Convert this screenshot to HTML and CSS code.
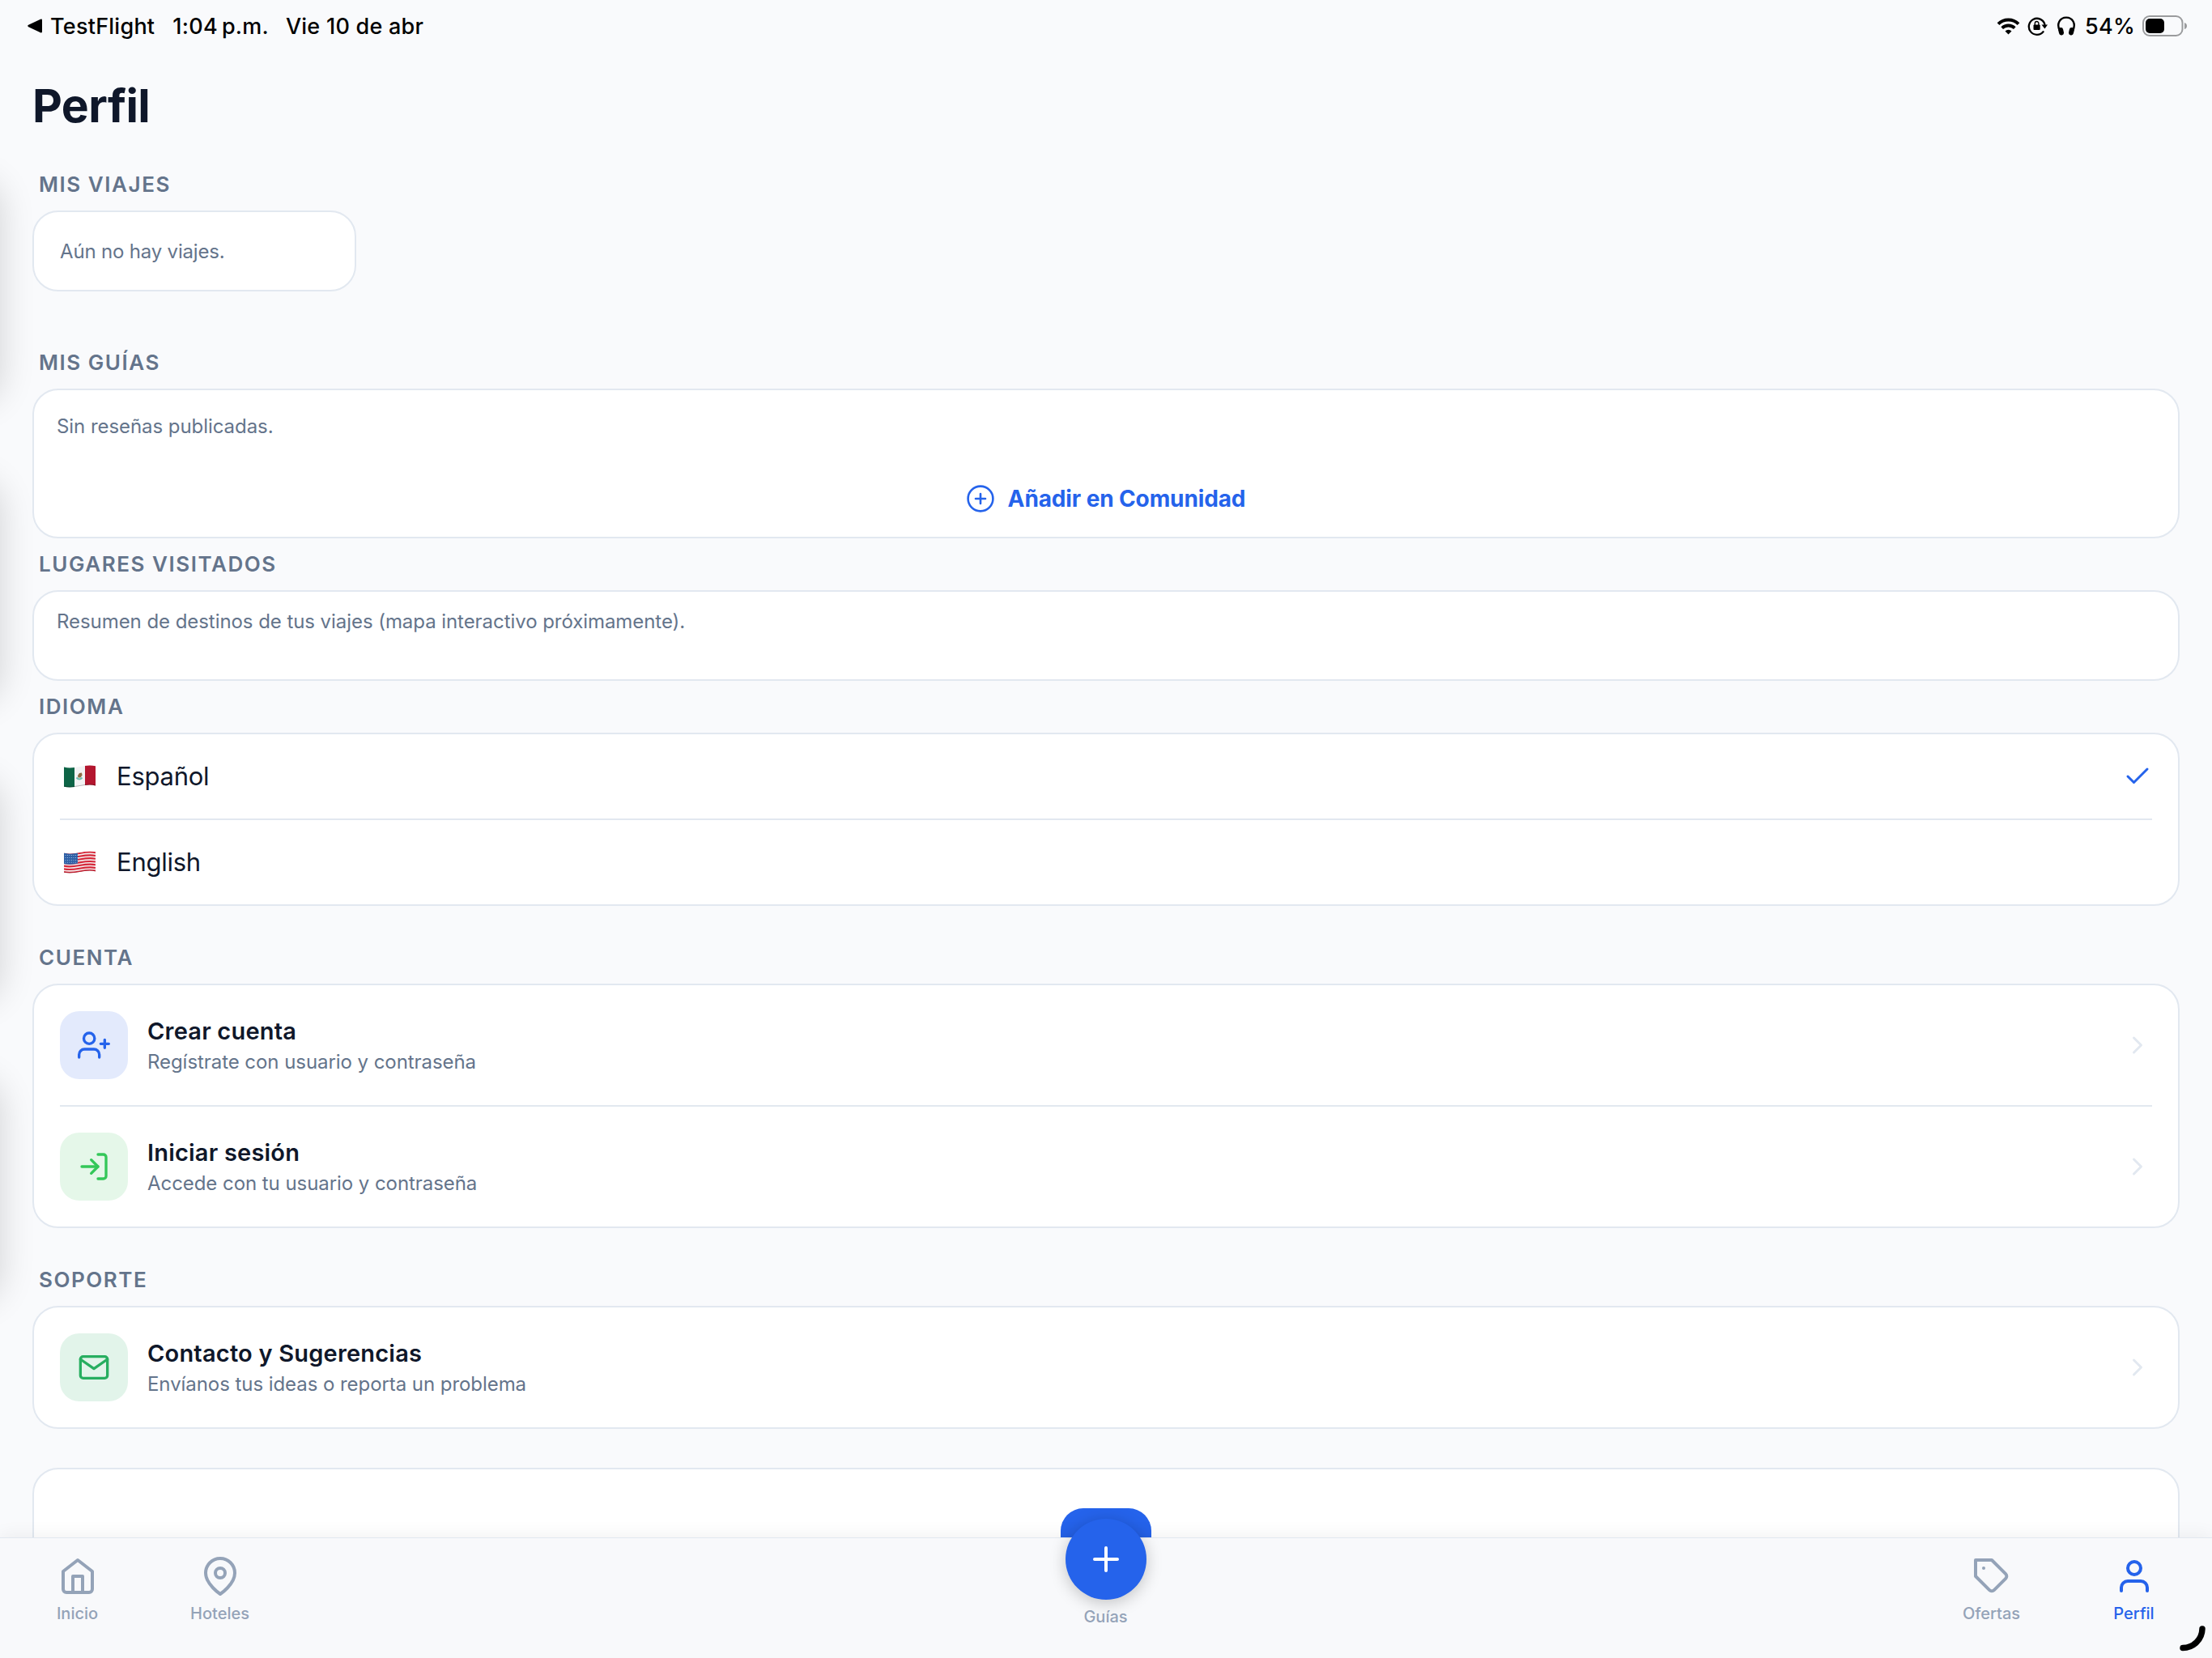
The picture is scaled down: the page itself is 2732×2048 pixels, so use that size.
FILE: index.html
```html
<!DOCTYPE html>
<html lang="es">
<head>
    <meta charset="UTF-8" />
    <meta name="viewport" content="width=device-width, initial-scale=1.0">
    <title>Perfil</title>
    <link rel="stylesheet" href="styles.css">
</head>
<body>
    <div class="edge-shadows">
        <div class="edge-card"></div>
        <div class="edge-card"></div>
        <div class="edge-card"></div>
        <div class="edge-card"></div>
    </div>

    <header class="status-bar">
        <div class="status-left">
            <svg class="back-icon" width="18" height="18" viewBox="0 0 18 18"><path d="M16 .8Q18 0 18 2v14q0 2-2 1.2L1.2 10.2Q-.8 9 1.2 7.8z"/></svg>
            <span class="status-app">TestFlight</span>
            <span class="status-time">1:04<span class="status-ampm">p.m.</span></span>
            <span class="status-date">Vie 10 de abr</span>
        </div>
        <div class="status-right">
            <svg class="wifi-icon" width="29" height="21" viewBox="0 0 29 21">
                <path d="M2 7.6a18 18 0 0 1 25 0" fill="none" stroke="#000" stroke-width="4"/>
                <path d="M6.7 12.6a11.3 11.3 0 0 1 15.6 0" fill="none" stroke="#000" stroke-width="3.8"/>
                <path d="M14.5 20.5l-4-4.1a5.8 5.8 0 0 1 8 0z"/>
            </svg>
            <svg class="lock-icon" width="26" height="24" viewBox="0 0 26 24">
                <path d="M19.5 19.2A10 10 0 1 1 21.4 10" fill="none" stroke="#000" stroke-width="2.3" stroke-linecap="round"/>
                <path d="M17.5 10.5h7.5l-3.6 5z"/>
                <rect x="7.5" y="10.5" width="8.2" height="6.5" rx="1"/>
                <path d="M9.3 11V8.8a2.3 2.3 0 0 1 4.6 0V11" fill="none" stroke="#000" stroke-width="1.4"/>
            </svg>
            <svg class="phones-icon" width="24" height="24" viewBox="0 0 24 24">
                <path d="M4.2 18.5C-.8 9 4.5 1.6 12 1.6S24.8 9 19.8 18.5" fill="none" stroke="#000" stroke-width="2.4"/>
                <rect x="2.6" y="14" width="6" height="9.5" rx="3" transform="rotate(-12 5.6 18.7)"/>
                <rect x="15.4" y="14" width="6" height="9.5" rx="3" transform="rotate(12 18.4 18.7)"/>
            </svg>
            <span class="status-percent">54%</span>
            <svg class="battery-icon" width="56" height="26" viewBox="0 0 56 26">
                <rect x="1" y="1" width="48.5" height="24" rx="8" fill="none" stroke="#9a9b9d" stroke-width="2"/>
                <rect x="4" y="4" width="23" height="18" rx="5"/>
                <path d="M52 9q3 1 3 4t-3 4z" fill="#9a9b9d"/>
            </svg>
        </div>
    </header>

    <main>
        <h1>Perfil</h1>

        <section class="trips">
            <h2>MIS VIAJES</h2>
            <div class="card empty-trips"><p>Aún no hay viajes.</p></div>
        </section>

        <section class="tight">
            <h2>MIS GUÍAS</h2>
            <div class="card guides">
                <p>Sin reseñas publicadas.</p>
                <a class="add-link">
                    <svg width="34" height="34" viewBox="0 0 34 34" fill="none" stroke="currentColor" stroke-width="2.6" stroke-linecap="round"><circle cx="17" cy="17" r="15.4"/><path d="M17 11v12M11 17h12"/></svg>
                    <span>Añadir en Comunidad</span>
                </a>
            </div>
        </section>

        <section class="tight">
            <h2>LUGARES VISITADOS</h2>
            <div class="card places"><p>Resumen de destinos de tus viajes (mapa interactivo próximamente).</p></div>
        </section>

        <section>
            <h2>IDIOMA</h2>
            <div class="card list">
                <div class="row language">
                    <svg class="flag" width="39" height="28" viewBox="0 0 39 28">
                        <defs>
                            <clipPath id="wave"><path d="M0 2.5C13 6 25-2 39 1.2V25.5C26 22 14 30 0 26.8z"/></clipPath>
                        </defs>
                        <g clip-path="url(#wave)">
                            <rect width="39" height="28" fill="#f2f2f3"/>
                            <rect width="13" height="28" fill="#0d6446"/>
                            <rect x="26" width="13" height="28" fill="#b3162f"/>
                            <path d="M15.5 15.5q3.5 4 7 0" fill="none" stroke="#6cc0b4" stroke-width="2"/>
                            <path d="M17 13l2-3 3-.5.5 3-2 3h-3z" fill="#8c6b43"/>
                            <path d="M0 26.5C14 30 26 22 39 25.3" fill="none" stroke="#000" stroke-opacity=".25" stroke-width="2"/>
                        </g>
                    </svg>
                    <span class="language-name">Español</span>
                    <svg class="check" width="36" height="36" viewBox="0 0 24 24"><polyline points="20 6 9 17 4 12"/></svg>
                </div>
                <div class="row language">
                    <svg class="flag" width="39" height="28" viewBox="0 0 39 28">
                        <g clip-path="url(#wave)">
                            <rect width="39" height="28" fill="#f4eeee"/>
                            <g fill="none" stroke="#d6283a" stroke-width="2.1">
                                <path d="M0 3.5C13 7 25-1 39 2.2"/>
                                <path d="M0 7.3C13 10.8 25 2.8 39 6"/>
                                <path d="M0 11.1C13 14.6 25 6.6 39 9.8"/>
                                <path d="M0 14.9C13 18.4 25 10.4 39 13.6"/>
                                <path d="M0 18.6C13 22.1 25 14.1 39 17.3"/>
                                <path d="M0 22.3C13 25.8 25 17.8 39 21"/>
                                <path d="M0 26C13 29.5 25 21.5 39 24.7"/>
                            </g>
                            <path d="M0 2.5Q9 4.5 17 2.5V15.5Q9 17.5 0 16z" fill="#2d5fa5"/>
                            <path d="M1.5 5.5H17M1.5 8.5H17M1.5 11.5H17M1.5 14.2H17" stroke="#9db9dc" stroke-width="1" stroke-dasharray="1 1.5"/>
                            <path d="M0 26.5C14 30 26 22 39 25.3" fill="none" stroke="#000" stroke-opacity=".2" stroke-width="1.5"/>
                        </g>
                    </svg>
                    <span class="language-name">English</span>
                </div>
            </div>
        </section>

        <section>
            <h2>CUENTA</h2>
            <div class="card list">
                <div class="row">
                    <div class="row-icon blue">
                        <svg width="40" height="40" viewBox="0 0 24 24"><path d="M16 21v-2a4 4 0 0 0-4-4H5a4 4 0 0 0-4 4v2"/><circle cx="8.5" cy="7" r="4"/><path d="M20 8v6M23 11h-6"/></svg>
                    </div>
                    <div class="row-text">
                        <h3>Crear cuenta</h3>
                        <p>Regístrate con usuario y contraseña</p>
                    </div>
                    <svg class="chevron" width="36" height="36" viewBox="0 0 24 24"><polyline points="9 18 15 12 9 6"/></svg>
                </div>
                <div class="row">
                    <div class="row-icon green">
                        <svg width="40" height="40" viewBox="0 0 24 24"><path d="M15 3h4a2 2 0 0 1 2 2v14a2 2 0 0 1-2 2h-4"/><polyline points="10 17 15 12 10 7"/><path d="M15 12H3"/></svg>
                    </div>
                    <div class="row-text">
                        <h3>Iniciar sesión</h3>
                        <p>Accede con tu usuario y contraseña</p>
                    </div>
                    <svg class="chevron" width="36" height="36" viewBox="0 0 24 24"><polyline points="9 18 15 12 9 6"/></svg>
                </div>
            </div>
        </section>

        <section>
            <h2>SOPORTE</h2>
            <div class="card list">
                <div class="row">
                    <div class="row-icon teal">
                        <svg width="40" height="40" viewBox="0 0 24 24"><path d="M4 4h16c1.1 0 2 .9 2 2v12c0 1.1-.9 2-2 2H4c-1.1 0-2-.9-2-2V6c0-1.1.9-2 2-2z"/><polyline points="22 6 12 13 2 6"/></svg>
                    </div>
                    <div class="row-text">
                        <h3>Contacto y Sugerencias</h3>
                        <p>Envíanos tus ideas o reporta un problema</p>
                    </div>
                    <svg class="chevron" width="36" height="36" viewBox="0 0 24 24"><polyline points="9 18 15 12 9 6"/></svg>
                </div>
            </div>
        </section>

        <div class="card last">
            <div class="last-button"></div>
        </div>
    </main>

    <nav class="tab-bar">
        <a class="tab">
            <svg width="48" height="48" viewBox="0 0 24 24"><path d="M3 9l9-7 9 7v11a2 2 0 0 1-2 2H5a2 2 0 0 1-2-2z"/><polyline points="9 22 9 12 15 12 15 22"/></svg>
            <span>Inicio</span>
        </a>
        <a class="tab">
            <svg width="48" height="48" viewBox="0 0 24 24"><path d="M21 10c0 7-9 13-9 13s-9-6-9-13a9 9 0 0 1 18 0z"/><circle cx="12" cy="10" r="3"/></svg>
            <span>Hoteles</span>
        </a>
        <a class="tab tab-main">
            <div class="fab">
                <svg width="48" height="48" viewBox="0 0 24 24"><path d="M12 5v14M5 12h14"/></svg>
            </div>
            <span>Guías</span>
        </a>
        <a class="tab">
            <svg width="48" height="48" viewBox="0 0 24 24"><path d="M20.59 13.41l-7.17 7.17a2 2 0 0 1-2.83 0L2 12V2h10l8.59 8.59a2 2 0 0 1 0 2.82z"/><path d="M7 7h.01"/></svg>
            <span>Ofertas</span>
        </a>
        <a class="tab active">
            <svg width="48" height="48" viewBox="0 0 24 24"><path d="M20 21v-2a4 4 0 0 0-4-4H8a4 4 0 0 0-4 4v2"/><circle cx="12" cy="7" r="4"/></svg>
            <span>Perfil</span>
        </a>
    </nav>

    <svg class="corner-mark" width="34" height="34" viewBox="0 0 34 34"><path d="M29 5A24 24 0 0 1 5 28.5" fill="none" stroke="#000" stroke-width="7.5" stroke-linecap="round"/></svg>
</body>
</html>
```
FILE: styles.css
```css
* {
    box-sizing: border-box;
}

body {
    margin: 0;
    height: 100vh;
    overflow: hidden;
    position: relative;
    background-color: #f9fafc;
    color: #0f172a;
    font-family: Inter, "Liberation Sans", sans-serif;
}

h1, h2, h3, p {
    margin: 0;
}

/* cards of the screen on the left, only their shadow is visible */
.edge-shadows {
    position: absolute;
    top: 224px;
    left: -100px;
    width: 100px;
    display: flex;
    flex-direction: column;
    gap: 98px;
}

.edge-card {
    height: 272px;
    border-radius: 32px;
    box-shadow: 0 0 44px rgba(0, 0, 0, 0.16);
}

.status-bar {
    display: flex;
    justify-content: space-between;
    height: 64px;
    padding: 0 30px 0 34px;
    color: #000;
    font-size: 27px;
    font-weight: 500;
    line-height: 64px;
    letter-spacing: 0.25px;
}

.status-left,
.status-right {
    display: flex;
    align-items: center;
}

.status-left > span,
.status-right > span {
    padding-top: 2px;
}

.status-app {
    margin-left: 10px;
}

.status-time {
    margin-left: 22px;
}

.status-ampm {
    margin-left: 5px;
}

.status-date {
    margin-left: 21px;
}

.lock-icon {
    margin-left: 9px;
}

.phones-icon {
    margin-left: 10px;
}

.status-percent {
    margin-left: 11px;
}

.battery-icon {
    margin-left: 9px;
}

main {
    padding: 33px 40px 0;
}

h1 {
    margin-bottom: 47px;
    font-size: 57px;
    font-weight: 700;
    line-height: 68px;
    letter-spacing: -0.6px;
}

section {
    margin-bottom: 48px;
}

section.trips {
    margin-bottom: 72px;
}

section.tight {
    margin-bottom: 16px;
}

h2 {
    margin: 0 8px 16px;
    color: #64748b;
    font-size: 26px;
    font-weight: 600;
    line-height: 32px;
    letter-spacing: 1.55px;
}

.card {
    background-color: #fff;
    border: 2px solid #e2e8f0;
    border-radius: 32px;
}

p {
    color: #64748b;
    font-size: 24px;
    line-height: 32px;
    letter-spacing: -0.06px;
}

.empty-trips {
    width: 400px;
    padding: 33px 32px 31px;
}

.empty-trips p {
    letter-spacing: -0.18px;
}

.guides {
    height: 185px;
    padding: 29px 28px 28px;
}

.places {
    height: 112px;
    padding: 21px 28px;
}

.add-link {
    display: flex;
    justify-content: center;
    align-items: center;
    gap: 17px;
    height: 36px;
    margin-top: 55px;
    color: #2563eb;
    font-size: 28px;
    font-weight: 700;
    line-height: 36px;
    letter-spacing: -0.12px;
}

.list {
    padding: 0 32px;
}

.row {
    display: flex;
    align-items: center;
    height: 148px;
}

.row + .row {
    height: 150px;
    border-top: 2px solid #e2e8f0;
}

.row.language {
    height: 104px;
}

.row.language + .row.language {
    height: 106px;
}

.flag {
    margin: 0 26px 0 5px;
}

.language-name {
    flex: 1;
    padding-bottom: 2px;
    font-size: 31px;
    letter-spacing: -0.25px;
}

.check {
    fill: none;
    stroke: #2563eb;
    stroke-width: 2;
    stroke-linecap: round;
    stroke-linejoin: round;
}

.row-icon {
    display: flex;
    justify-content: center;
    align-items: center;
    width: 84px;
    height: 84px;
    margin-right: 24px;
    border-radius: 24px;
}

.row-icon svg,
.tab svg,
.chevron {
    fill: none;
    stroke: currentColor;
    stroke-width: 2;
    stroke-linecap: round;
    stroke-linejoin: round;
}

.row-icon.blue {
    background-color: #e3eafc;
    color: #2563eb;
}

.row-icon.green {
    background-color: #e5f7e9;
    color: #34c759;
}

.row-icon.teal {
    background-color: #e2f4ea;
    color: #27ae60;
}

.row-text {
    flex: 1;
    padding-top: 2px;
}

h3 {
    margin-bottom: 4px;
    font-size: 29px;
    font-weight: 600;
    line-height: 36px;
    letter-spacing: 0.2px;
}

.chevron {
    color: #e2e8f0;
}

.last {
    height: 300px;
    padding-top: 48px;
}

.last-button {
    width: 112px;
    height: 112px;
    margin: 0 auto;
    border-radius: 28px;
    background-color: #2563eb;
}

.tab-bar {
    position: absolute;
    left: 0;
    right: 0;
    bottom: 0;
    display: flex;
    height: 149px;
    padding: 23px 8px 0;
    background-color: #f8f9fb;
    border-top: 1px solid #e2e8f0;
    box-shadow: 0 -4px 20px rgba(0, 0, 0, 0.05);
}

.tab {
    display: flex;
    flex-direction: column;
    align-items: center;
    gap: 9px;
    width: 176px;
    color: #94a3b8;
    font-size: 20px;
    font-weight: 500;
    line-height: 26px;
}

.tab span {
    margin-right: 1px;
}

.tab.active {
    color: #2563eb;
}

.tab-main {
    flex: 1;
    gap: 8px;
    margin-top: -47px;
}

.fab {
    display: flex;
    justify-content: center;
    align-items: center;
    width: 100px;
    height: 100px;
    border-radius: 50%;
    background-color: #2563eb;
    color: #fff;
    box-shadow: 0 4px 20px rgba(0, 0, 0, 0.22);
}

.corner-mark {
    position: absolute;
    right: 7px;
    bottom: 7px;
}
```
